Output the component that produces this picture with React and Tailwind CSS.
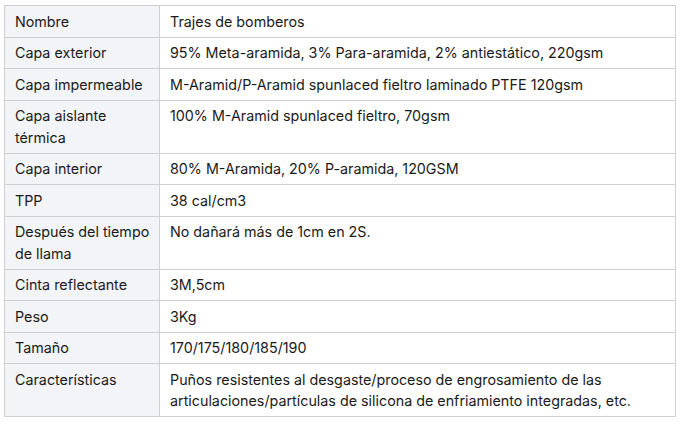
import React from "react";

const rows = [
  ["Nombre", "Trajes de bomberos"],
  ["Capa exterior", "95% Meta-aramida, 3% Para-aramida, 2% antiestático, 220gsm"],
  ["Capa impermeable", "M-Aramid/P-Aramid spunlaced fieltro laminado PTFE 120gsm"],
  ["Capa aislante térmica", "100% M-Aramid spunlaced fieltro, 70gsm"],
  ["Capa interior", "80% M-Aramida, 20% P-aramida, 120GSM"],
  ["TPP", "38 cal/cm3"],
  ["Después del tiempo de llama", "No dañará más de 1cm en 2S."],
  ["Cinta reflectante", "3M,5cm"],
  ["Peso", "3Kg"],
  ["Tamaño", "170/175/180/185/190"],
  ["Características", "Puños resistentes al desgaste/proceso de engrosamiento de las articulaciones/partículas de silicona de enfriamiento integradas, etc."],
];

export default function App() {
  return (
    <div className="bg-white w-[687px] h-[426px] pt-[5px] pl-[4px]" style={{ fontFamily: "Inter, sans-serif" }}>
      <table className="w-[672px] border-collapse table-fixed text-[14.3px] leading-[21.5px] text-[#1a1a1a]">
        <colgroup>
          <col className="w-[155px]" />
          <col />
        </colgroup>
        <tbody>
          {rows.map(([k, v]) => (
            <tr key={k}>
              <td className="border border-[#cfcfcf] bg-[#f3f4f7] pl-[10px] pr-[4px] py-[4.5px] align-top">{k}</td>
              <td className="border border-[#cfcfcf] bg-white px-[10px] py-[4.5px] align-top">{v}</td>
            </tr>
          ))}
        </tbody>
      </table>
    </div>
  );
}
